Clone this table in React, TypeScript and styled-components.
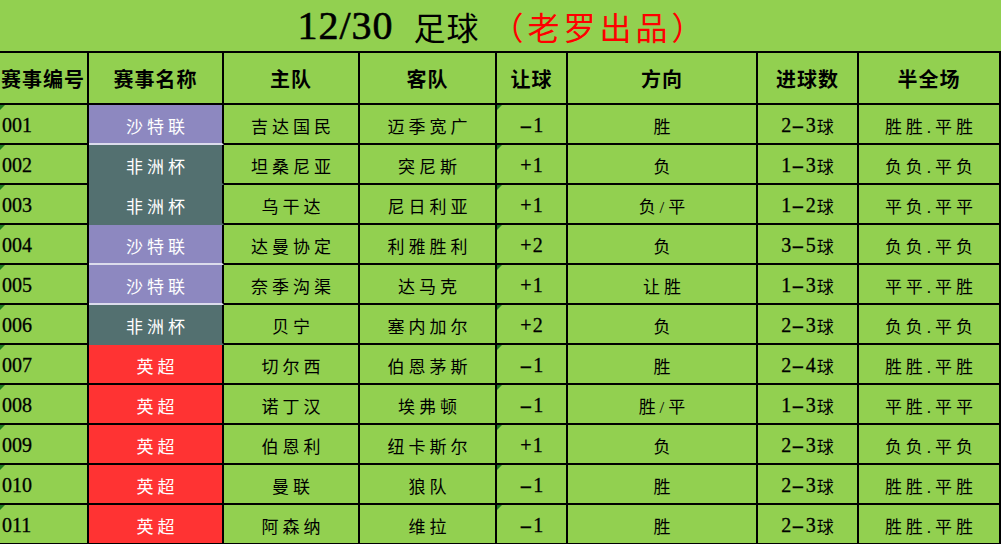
import styled, { createGlobalStyle, css } from "styled-components";

const GlobalStyle = createGlobalStyle`
  html, body {
    margin: 0;
    padding: 0;
    background: #92d050;
    overflow: hidden;
  }
`;

const FONT = `"Liberation Serif", "Noto Sans CJK SC", serif`;

const Sheet = styled.div`
  width: 1001px;
  height: 544px;
  background: #92d050;
  font-family: ${FONT};
  color: #000;
  overflow: hidden;
`;

const Title = styled.div`
  height: 53px;
  box-sizing: border-box;
  border-bottom: 2px solid #000;
  display: flex;
  align-items: center;
  justify-content: center;
  padding-left: 4px;
  font-size: 32px;
  letter-spacing: 1px;
`;

const TitleDigits = styled.span`
  font-size: 40px;
  margin-right: 20px;
  -webkit-text-stroke: 0.6px #000;
`;

const TitleRed = styled.span`
  color: #ff0000;
  margin-left: 12px;
  letter-spacing: 4px;
`;

const Grid = styled.div`
  display: grid;
  grid-template-columns: 89px 135px 136px 137px 71px 190px 101px 142px;
  grid-auto-rows: 40px;
  grid-template-rows: 52px;
`;

type CellProps = {
  $align?: "left" | "center";
  $ls?: number;
  $mark?: boolean;
};

const cellBase = css`
  position: relative;
  box-sizing: border-box;
  border-right: 2px solid #000;
  border-bottom: 2px solid #000;
  display: flex;
  align-items: center;
  white-space: nowrap;
  overflow: hidden;
`;

const HeadCell = styled.div<CellProps>`
  ${cellBase};
  justify-content: ${(p) => (p.$align === "left" ? "flex-start" : "center")};
  padding-left: ${(p) => (p.$align === "left" ? "1px" : "0")};
  font-weight: 700;
  font-size: 20px;
  letter-spacing: 1px;
`;

const Cell = styled.div<CellProps>`
  ${cellBase};
  justify-content: ${(p) => (p.$align === "left" ? "flex-start" : "center")};
  padding-left: ${(p) => (p.$align === "left" ? "2px" : `${p.$ls ?? 0}px`)};
  padding-top: 2px;
  font-size: 20px;
  letter-spacing: ${(p) => p.$ls ?? 0}px;
  -webkit-text-stroke: 0.3px #000;

  ${(p) =>
    p.$mark &&
    css`
      &::before {
        content: "";
        position: absolute;
        top: 0;
        left: 0;
        border-top: 5px solid #1f7a1f;
        border-right: 5px solid transparent;
      }
    `}
`;

const Cjk = styled.span`
  font-size: 17px;
  -webkit-text-stroke: 0;
`;

// the sheet's hyphen is a half-width dash, wider than the serif one
const Dash = styled.span`
  display: inline-block;
  transform: scaleX(1.9);
  margin: 0 3px;
`;

type Kind = "sa" | "af" | "pl";

const NAME_BG: Record<Kind, string> = {
  sa: "#8d88c0",
  af: "#537070",
  pl: "#ff3333",
};

const NAME_LINE: Record<Kind, string> = {
  sa: "#dcdcec",
  af: "#537070",
  pl: "#000",
};

const NameCell = styled.div<{ $kind: Kind }>`
  ${cellBase};
  justify-content: center;
  padding-left: 4px;
  padding-top: 2px;
  background: ${(p) => NAME_BG[p.$kind]};
  border-bottom-color: ${(p) => NAME_LINE[p.$kind]};
  color: #fff;
  font-size: 17px;
  letter-spacing: 4px;
`;

type Match = {
  no: string;
  league: string;
  kind: Kind;
  home: string;
  away: string;
  hcp: string;
  dir: string;
  goals: string;
  half: string;
};

const matches: Match[] = [
  { no: "001", league: "沙特联", kind: "sa", home: "吉达国民", away: "迈季宽广", hcp: "-1", dir: "胜", goals: "2-3球", half: "胜胜.平胜" },
  { no: "002", league: "非洲杯", kind: "af", home: "坦桑尼亚", away: "突尼斯", hcp: "+1", dir: "负", goals: "1-3球", half: "负负.平负" },
  { no: "003", league: "非洲杯", kind: "af", home: "乌干达", away: "尼日利亚", hcp: "+1", dir: "负/平", goals: "1-2球", half: "平负.平平" },
  { no: "004", league: "沙特联", kind: "sa", home: "达曼协定", away: "利雅胜利", hcp: "+2", dir: "负", goals: "3-5球", half: "负负.平负" },
  { no: "005", league: "沙特联", kind: "sa", home: "奈季沟渠", away: "达马克", hcp: "+1", dir: "让胜", goals: "1-3球", half: "平平.平胜" },
  { no: "006", league: "非洲杯", kind: "af", home: "贝宁", away: "塞内加尔", hcp: "+2", dir: "负", goals: "2-3球", half: "负负.平负" },
  { no: "007", league: "英超", kind: "pl", home: "切尔西", away: "伯恩茅斯", hcp: "-1", dir: "胜", goals: "2-4球", half: "胜胜.平胜" },
  { no: "008", league: "英超", kind: "pl", home: "诺丁汉", away: "埃弗顿", hcp: "-1", dir: "胜/平", goals: "1-3球", half: "平胜.平平" },
  { no: "009", league: "英超", kind: "pl", home: "伯恩利", away: "纽卡斯尔", hcp: "+1", dir: "负", goals: "2-3球", half: "负负.平负" },
  { no: "010", league: "英超", kind: "pl", home: "曼联", away: "狼队", hcp: "-1", dir: "胜", goals: "2-3球", half: "胜胜.平胜" },
  { no: "011", league: "英超", kind: "pl", home: "阿森纳", away: "维拉", hcp: "-1", dir: "胜", goals: "2-3球", half: "胜胜.平胜" },
];

const headers = ["赛事编号", "赛事名称", "主队", "客队", "让球", "方向", "进球数", "半全场"];

// widen the dash, keep a trailing CJK char (球) at the CJK size
const Num = ({ text }: { text: string }) => {
  const tail = /[^\x00-\x7f]$/.test(text);
  const body = tail ? text.slice(0, -1) : text;
  return (
    <>
      {body.split("-").map((b, i) => (
        <span key={i}>
          {i > 0 && <Dash>-</Dash>}
          {b}
        </span>
      ))}
      {tail && <Cjk>{text.slice(-1)}</Cjk>}
    </>
  );
};

export default function App() {
  return (
    <>
      <GlobalStyle />
      <Sheet>
        <Title>
          <TitleDigits>12/30</TitleDigits>
          足球
          <TitleRed>（老罗出品）</TitleRed>
        </Title>
        <Grid>
          {headers.map((h, i) => (
            <HeadCell key={h} $align={i === 0 ? "left" : "center"}>
              {h}
            </HeadCell>
          ))}
          {matches.map((m) => [
            <Cell key={m.no + "n"} $align="left" $mark>
              {m.no}
            </Cell>,
            <NameCell key={m.no + "l"} $kind={m.kind}>
              {m.league}
            </NameCell>,
            <Cell key={m.no + "h"} $ls={4}>
              <Cjk>{m.home}</Cjk>
            </Cell>,
            <Cell key={m.no + "a"} $ls={4}>
              <Cjk>{m.away}</Cjk>
            </Cell>,
            <Cell key={m.no + "c"} $mark $ls={1}>
              <Num text={m.hcp} />
            </Cell>,
            <Cell key={m.no + "d"} $ls={4}>
              <Cjk>{m.dir}</Cjk>
            </Cell>,
            <Cell key={m.no + "g"} $ls={1}>
              <Num text={m.goals} />
            </Cell>,
            <Cell key={m.no + "f"} $ls={4}>
              <Cjk>{m.half}</Cjk>
            </Cell>,
          ])}
        </Grid>
      </Sheet>
    </>
  );
}
